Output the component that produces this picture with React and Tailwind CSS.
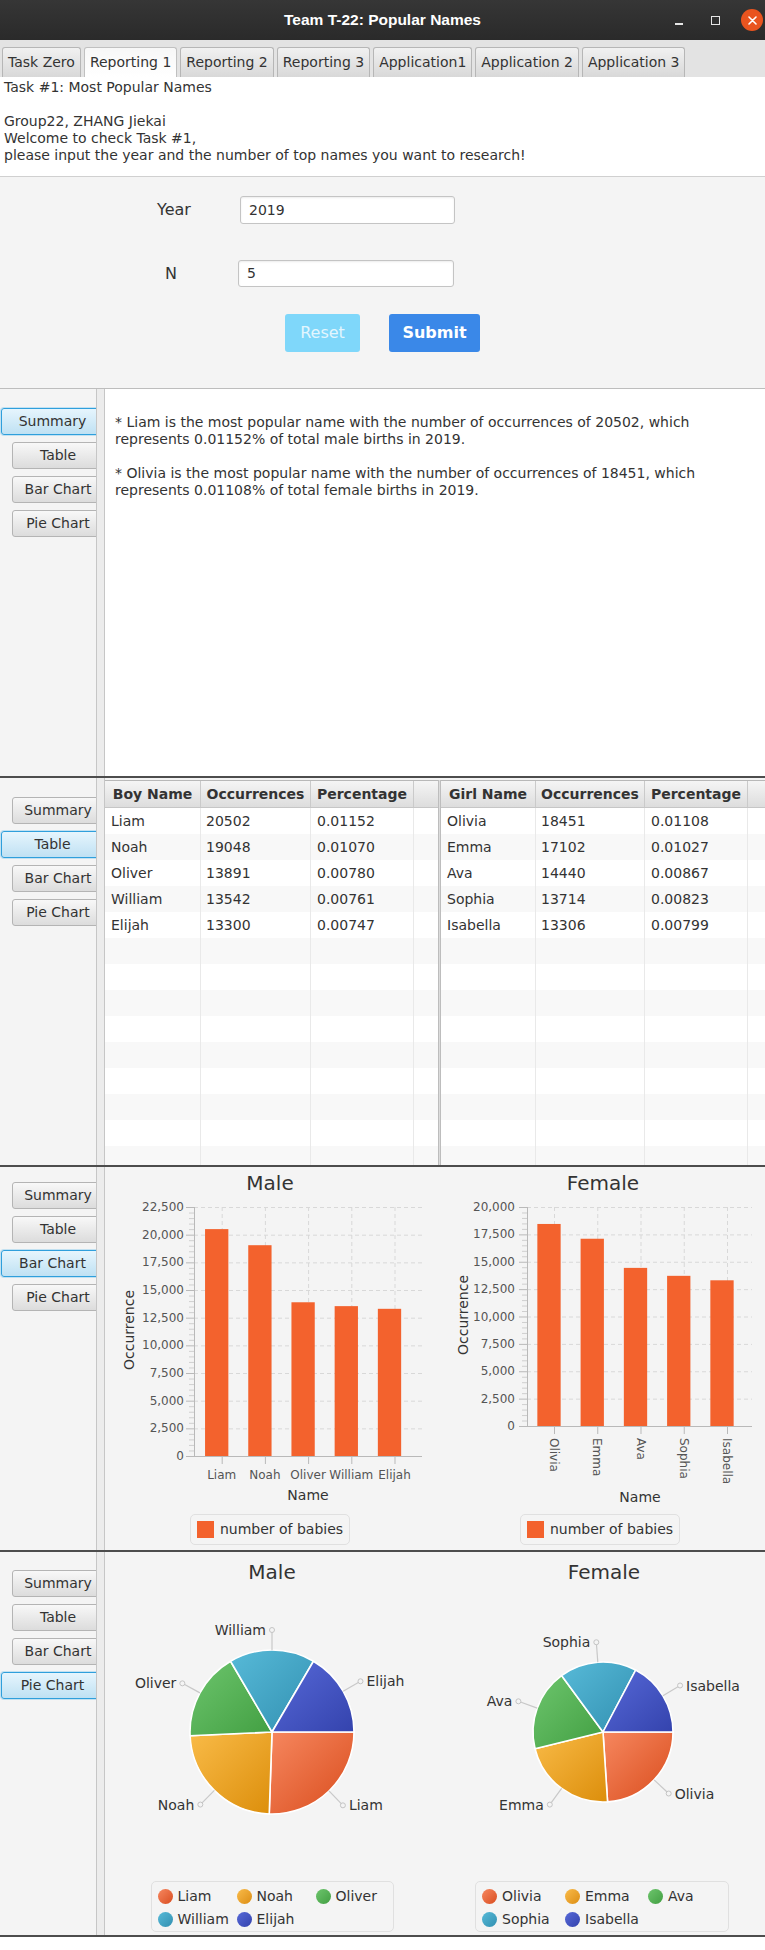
import React from 'react';

const male = [
  { name: 'Liam', n: 20502, p: '0.01152' },
  { name: 'Noah', n: 19048, p: '0.01070' },
  { name: 'Oliver', n: 13891, p: '0.00780' },
  { name: 'William', n: 13542, p: '0.00761' },
  { name: 'Elijah', n: 13300, p: '0.00747' },
];
const female = [
  { name: 'Olivia', n: 18451, p: '0.01108' },
  { name: 'Emma', n: 17102, p: '0.01027' },
  { name: 'Ava', n: 14440, p: '0.00867' },
  { name: 'Sophia', n: 13714, p: '0.00823' },
  { name: 'Isabella', n: 13306, p: '0.00799' },
];

const PIE = [
  { a: '#f6875f', b: '#d94c1c' },
  { a: '#f9bb48', b: '#dc8e0b' },
  { a: '#6dc56d', b: '#429f42' },
  { a: '#57bad8', b: '#3290b1' },
  { a: '#5769d8', b: '#3443ad' },
];

const DOTS = [
  'bg-linear-to-br from-[#f6875f] to-[#d94c1c]',
  'bg-linear-to-br from-[#f9bb48] to-[#dc8e0b]',
  'bg-linear-to-br from-[#6dc56d] to-[#429f42]',
  'bg-linear-to-br from-[#57bad8] to-[#3290b1]',
  'bg-linear-to-br from-[#5769d8] to-[#3443ad]',
];

const TABS = ['Task Zero', 'Reporting 1', 'Reporting 2', 'Reporting 3', 'Application1', 'Application 2', 'Application 3'];

function SideButtons({ active, pt }) {
  const items = ['Summary', 'Table', 'Bar Chart', 'Pie Chart'];
  return (
    <div className={`w-[96px] shrink-0 overflow-hidden bg-[#f4f4f4] flex flex-col gap-[7px] ${pt}`}>
      {items.map((it) =>
        it === active ? (
          <div
            key={it}
            className="ml-[1px] w-[103px] h-[27px] shrink-0 rounded-[3px] border border-[#2f9fdc] bg-linear-to-b from-[#e6f5fd] to-[#bfe1f3] shadow-[0_0_0_1px_rgba(100,190,235,0.35)] flex items-center justify-center text-[14px] text-[#333] whitespace-nowrap"
          >
            {it}
          </div>
        ) : (
          <div
            key={it}
            className="ml-[12px] w-[92px] h-[27px] shrink-0 rounded-[3px] border border-[#b4b4b4] bg-linear-to-b from-[#f8f8f8] to-[#dcdcdc] flex items-center justify-center text-[14px] text-[#333] whitespace-nowrap"
          >
            {it}
          </div>
        )
      )}
    </div>
  );
}

function Divider() {
  return <div className="w-[9px] shrink-0 bg-[#ececec] border-x border-[#c6c6c6]" />;
}

function NameTable({ head, data, widths, className }) {
  const rows = Array.from({ length: 15 }, (_, i) => data[i] || null);
  const heads = [head, 'Occurrences', 'Percentage'];
  return (
    <div className={`h-full overflow-hidden bg-white border-t border-[#b8b8b8] ${className}`}>
      <div className="flex h-[27px] border-b border-[#c6c6c6] bg-linear-to-b from-[#f5f5f5] to-[#dddddd]">
        {heads.map((h, i) => (
          <div
            key={h}
            className={`${widths[i]} shrink-0 border-r border-[#cacaca] flex items-center justify-center font-bold text-[14px] text-[#333] whitespace-nowrap`}
          >
            {h}
          </div>
        ))}
        <div className="flex-1" />
      </div>
      {rows.map((r, i) => (
        <div key={i} className={`flex h-[26px] ${i % 2 ? 'bg-[#f8f8f8]' : 'bg-white'}`}>
          <div className={`${widths[0]} shrink-0 border-r border-[#e9e9e9] pl-[6px] flex items-center text-[14px] text-[#333]`}>
            {r ? r.name : ''}
          </div>
          <div className={`${widths[1]} shrink-0 border-r border-[#e9e9e9] pl-[5px] flex items-center text-[14px] text-[#333]`}>
            {r ? r.n : ''}
          </div>
          <div className={`${widths[2]} shrink-0 border-r border-[#e9e9e9] pl-[6px] flex items-center text-[14px] text-[#333]`}>
            {r ? r.p : ''}
          </div>
          <div className="flex-1" />
        </div>
      ))}
    </div>
  );
}

function BarChart({ data, max, width, axisX, right, zero, ticks, labelRight, rotate, nameX, nameY, occX, occY }) {
  const top = 12;
  const scale = (zero - top) / max;
  const majors = [];
  for (let v = 0; v <= max; v += 2500) majors.push(v);
  const minors = [];
  for (let v = 500; v < max; v += 500) if (v % 2500) minors.push(v);
  const Y = (v) => zero - v * scale;
  return (
    <svg width={width} height={315} className="block">
      {majors
        .filter((v) => v > 0)
        .map((v) => (
          <line key={'h' + v} x1={axisX} x2={right} y1={Y(v) + 0.5} y2={Y(v) + 0.5} stroke="#d8d8d8" strokeDasharray="4 3" />
        ))}
      {ticks.map((t) => (
        <line key={'v' + t} x1={t + 0.5} x2={t + 0.5} y1={top} y2={zero} stroke="#d8d8d8" strokeDasharray="4 3" />
      ))}
      {data.map((d, i) => {
        const y = Y(d.n);
        return <rect key={d.name} x={ticks[i] - 5 - 11.65} y={y} width={23.3} height={zero - y} fill="#f3622d" />;
      })}
      <line x1={axisX + 0.5} x2={axisX + 0.5} y1={top} y2={zero} stroke="#b9b9b9" />
      <line x1={axisX} x2={right} y1={zero + 0.5} y2={zero + 0.5} stroke="#b9b9b9" />
      {majors.map((v) => (
        <line key={'mt' + v} x1={axisX - 8} x2={axisX} y1={Y(v) + 0.5} y2={Y(v) + 0.5} stroke="#b9b9b9" />
      ))}
      {minors.map((v) => (
        <line key={'mn' + v} x1={axisX - 5} x2={axisX} y1={Y(v) + 0.5} y2={Y(v) + 0.5} stroke="#cfcfcf" />
      ))}
      {majors.map((v) => (
        <text key={'yl' + v} x={labelRight} y={Y(v)} textAnchor="end" dominantBaseline="central" fontSize="12" fill="#555">
          {v.toLocaleString('en-US')}
        </text>
      ))}
      {ticks.map((t) => (
        <line key={'xt' + t} x1={t + 0.5} x2={t + 0.5} y1={zero} y2={zero + 8} stroke="#b9b9b9" />
      ))}
      {data.map((d, i) =>
        rotate ? (
          <text
            key={'xl' + d.name}
            x={ticks[i]}
            y={zero + 12}
            transform={`rotate(90 ${ticks[i]} ${zero + 12})`}
            textAnchor="start"
            dominantBaseline="central"
            fontSize="12"
            fill="#555"
          >
            {d.name}
          </text>
        ) : (
          <text key={'xl' + d.name} x={ticks[i]} y={zero + 19} textAnchor="middle" dominantBaseline="central" fontSize="12" fill="#555">
            {d.name}
          </text>
        )
      )}
      <text x={nameX} y={nameY} textAnchor="middle" dominantBaseline="central" fontSize="14" fill="#333">
        Name
      </text>
      <text
        x={occX}
        y={occY}
        transform={`rotate(-90 ${occX} ${occY})`}
        textAnchor="middle"
        dominantBaseline="central"
        fontSize="14"
        fill="#333"
      >
        Occurrence
      </text>
    </svg>
  );
}

function BarLegend() {
  return (
    <div className="mx-auto mt-[4px] h-[31px] flex items-center gap-[6px] px-[6px] border border-[#e0e0e0] rounded-[5px] bg-[#f4f4f4]">
      <span className="w-[17px] h-[17px] bg-[#f3622d]" />
      <span className="text-[14px] text-[#333] whitespace-nowrap">number of babies</span>
    </div>
  );
}

function PieChart({ data, cx, cy, r, width, id }) {
  const total = data.reduce((s, d) => s + d.n, 0);
  let acc = 0;
  const slices = data.map((d, i) => {
    const sweep = (d.n / total) * 360;
    const s = { a0: acc, a1: acc + sweep, i, name: d.name };
    acc += sweep;
    return s;
  });
  const rad = (deg) => (deg * Math.PI) / 180;
  const pt = (deg, rr) => [cx + rr * Math.cos(rad(deg)), cy + rr * Math.sin(rad(deg))];
  return (
    <svg width={width} height={290} className="block">
      <defs>
        {PIE.map((c, i) => (
          <linearGradient key={i} id={`${id}${i}`} x1="0" y1="0" x2="1" y2="1">
            <stop offset="0" stopColor={c.a} />
            <stop offset="1" stopColor={c.b} />
          </linearGradient>
        ))}
      </defs>
      {slices.map((s) => {
        const [x0, y0] = pt(s.a0, r);
        const [x1, y1] = pt(s.a1, r);
        const large = s.a1 - s.a0 > 180 ? 1 : 0;
        return (
          <path
            key={s.name}
            d={`M${cx},${cy} L${x0},${y0} A${r},${r} 0 ${large} 1 ${x1},${y1} Z`}
            fill={`url(#${id}${s.i})`}
            stroke="#ffffff"
            strokeWidth="1.6"
            strokeLinejoin="round"
          />
        );
      })}
      {slices.map((s) => {
        const mid = (s.a0 + s.a1) / 2;
        const [ex, ey] = pt(mid, r);
        const [lx, ly] = pt(mid, r + 20);
        const left = Math.cos(rad(mid)) < 0;
        return (
          <g key={'l' + s.name}>
            <line x1={ex} y1={ey} x2={lx} y2={ly} stroke="#c8c8c8" strokeWidth="1.2" />
            <circle cx={lx} cy={ly} r="2.5" fill="#f4f4f4" stroke="#c4c4c4" />
            <text
              x={left ? lx - 6 : lx + 6}
              y={ly}
              textAnchor={left ? 'end' : 'start'}
              dominantBaseline="central"
              fontSize="14"
              fill="#333"
            >
              {s.name}
            </text>
          </g>
        );
      })}
    </svg>
  );
}

function PieLegend({ data, cols, widths }) {
  return (
    <div className={`mx-auto mt-[7px] h-[51px] border border-[#e0e0e0] rounded-[5px] bg-[#f4f4f4] px-[6px] pt-[3px] grid ${cols}`}>
      {data.map((d, i) => (
        <div key={d.name} className="flex items-center h-[22px] gap-[5px]">
          <span className={`w-[15px] h-[15px] shrink-0 rounded-full ${DOTS[i]}`} />
          <span className="text-[14px] text-[#333] whitespace-nowrap">{d.name}</span>
        </div>
      ))}
    </div>
  );
}

export default function App() {
  return (
    <div className="w-[765px] h-[1950px] overflow-hidden bg-white font-['DejaVu_Sans',sans-serif] text-[#333]">
      {/* Title bar */}
      <div className="h-[40px] bg-linear-to-b from-[#363636] to-[#2a2a2a] grid grid-cols-[1fr_auto_1fr] items-center">
        <div />
        <div className="font-['Liberation_Sans',sans-serif] font-bold text-[15.5px] text-white whitespace-nowrap">
          Team T-22: Popular Names
        </div>
        <div className="flex items-center justify-end pr-[2px]">
          <span className="w-[8px] h-[2px] bg-[#e6e6e6] mt-[8px]" />
          <span className="ml-[28px] w-[9px] h-[9px] border border-[#e6e6e6]" />
          <span className="ml-[21px] w-[22px] h-[22px] rounded-full bg-[#e9541f] flex items-center justify-center">
            <svg width="9" height="9" viewBox="0 0 9 9">
              <path d="M1 1 L8 8 M8 1 L1 8" stroke="#fff" strokeWidth="1.6" strokeLinecap="round" />
            </svg>
          </span>
        </div>
      </div>

      {/* Tabs */}
      <div className="h-[37px] bg-[#e3e3e3] flex items-end pl-[2px] gap-[3px]">
        {TABS.map((t) =>
          t === 'Reporting 1' ? (
            <div
              key={t}
              className="h-[30px] px-[5px] flex items-center rounded-t-[3px] border border-b-0 border-[#c0c0c0] bg-linear-to-b from-[#f7f7f7] to-white text-[14px] text-[#333] whitespace-nowrap"
            >
              {t}
            </div>
          ) : (
            <div
              key={t}
              className="h-[30px] px-[5px] flex items-center rounded-t-[3px] border border-b-0 border-[#b6b6b6] bg-linear-to-b from-[#f1f1f1] to-[#d8d8d8] text-[14px] text-[#333] whitespace-nowrap"
            >
              {t}
            </div>
          )
        )}
      </div>

      {/* Intro text */}
      <div className="h-[99px] bg-white pl-[4px] pt-[2px] text-[14px] leading-[17px] text-[#333]">
        <div>Task #1: Most Popular Names</div>
        <div className="h-[17px]" />
        <div>Group22, ZHANG Jiekai</div>
        <div>Welcome to check Task #1,</div>
        <div>please input the year and the number of top names you want to research!</div>
      </div>

      {/* Form */}
      <div className="h-[212px] bg-[#f4f4f4] border-t border-[#d0d0d0] flex flex-col">
        <div className="mt-[19px] h-[28px] flex items-center">
          <span className="ml-[157px] w-[83px] text-[16px] text-[#333]">Year</span>
          <div className="w-[215px] h-[28px] bg-white border border-[#c4c4c4] rounded-[3px] shadow-[inset_0_1px_2px_rgba(0,0,0,0.08)] pl-[8px] flex items-center text-[14px] text-[#333]">
            2019
          </div>
        </div>
        <div className="mt-[36px] h-[27px] flex items-center">
          <span className="ml-[165px] w-[73px] text-[16px] text-[#333]">N</span>
          <div className="w-[216px] h-[27px] bg-white border border-[#c4c4c4] rounded-[3px] shadow-[inset_0_1px_2px_rgba(0,0,0,0.08)] pl-[8px] flex items-center text-[14px] text-[#333]">
            5
          </div>
        </div>
        <div className="mt-[27px] h-[38px] flex">
          <div className="ml-[285px] w-[75px] h-[38px] rounded-[3px] bg-[#7fd7fa] flex items-center justify-center text-[16px] text-[#e3f6fe]">
            Reset
          </div>
          <div className="ml-[29px] w-[91px] h-[38px] rounded-[3px] bg-[#3a88e8] flex items-center justify-center text-[16px] font-bold text-white">
            Submit
          </div>
        </div>
      </div>

      {/* Section 1: Summary */}
      <div className="h-[388px] border-t border-[#bdbdbd] flex">
        <SideButtons active="Summary" pt="pt-[19px]" />
        <Divider />
        <div className="flex-1 bg-white pl-[10px] pt-[25px] text-[14px] leading-[17px] text-[#333]">
          <div>* Liam is the most popular name with the number of occurrences of 20502, which</div>
          <div>represents 0.01152% of total male births in 2019.</div>
          <div className="h-[17px]" />
          <div>* Olivia is the most popular name with the number of occurrences of 18451, which</div>
          <div>represents 0.01108% of total female births in 2019.</div>
        </div>
      </div>

      {/* Section 2: Table */}
      <div className="h-[389px] border-t-2 border-[#4d4d4d] flex">
        <SideButtons active="Table" pt="pt-[19px]" />
        <Divider />
        <div className="flex-1 flex pt-[2px] bg-[#f4f4f4] min-w-0">
          <NameTable head="Boy Name" data={male} widths={['w-[96px]', 'w-[110px]', 'w-[103px]']} className="w-[333px] shrink-0" />
          <div className="w-[3px] shrink-0 bg-[#dcdcdc] border-x border-[#bdbdbd]" />
          <NameTable head="Girl Name" data={female} widths={['w-[95px]', 'w-[109px]', 'w-[103px]']} className="flex-1 min-w-0" />
        </div>
      </div>

      {/* Section 3: Bar charts */}
      <div className="h-[385px] border-t-2 border-[#4d4d4d] flex">
        <SideButtons active="Bar Chart" pt="pt-[15px]" />
        <Divider />
        <div className="flex-1 flex bg-[#f4f4f4] pt-[4px]">
          <div className="w-[330px] shrink-0 flex flex-col">
            <div className="h-[24px] leading-[24px] text-center text-[20px] text-[#333]">Male</div>
            <BarChart
              data={male}
              max={22500}
              width={330}
              axisX={89}
              right={317}
              zero={261}
              ticks={[116.7, 159.9, 203.1, 246.3, 289.5]}
              labelRight={79}
              rotate={false}
              nameX={203}
              nameY={300}
              occX={24}
              occY={135}
            />
            <BarLegend />
          </div>
          <div className="w-[330px] shrink-0 flex flex-col">
            <div className="h-[24px] leading-[24px] text-center pl-[6px] text-[20px] text-[#333]">Female</div>
            <BarChart
              data={female}
              max={20000}
              width={330}
              axisX={92}
              right={317}
              zero={231}
              ticks={[119, 162.25, 205.5, 248.75, 292]}
              labelRight={80}
              rotate={true}
              nameX={205}
              nameY={302}
              occX={28}
              occY={120}
            />
            <BarLegend />
          </div>
        </div>
      </div>

      {/* Section 4: Pie charts */}
      <div className="h-[387px] border-y-2 border-[#4d4d4d] flex">
        <SideButtons active="Pie Chart" pt="pt-[18px]" />
        <Divider />
        <div className="flex-1 flex bg-[#f4f4f4] pt-[8px]">
          <div className="w-[334px] shrink-0 flex flex-col">
            <div className="h-[24px] leading-[24px] text-center text-[20px] text-[#333]">Male</div>
            <PieChart data={male} cx={167} cy={148} r={82} width={334} id="pm" />
            <PieLegend data={male} cols="grid-cols-[79px_79px_71px]" />
          </div>
          <div className="flex-1 flex flex-col">
            <div className="h-[24px] leading-[24px] text-center pl-[4px] text-[20px] text-[#333]">Female</div>
            <PieChart data={female} cx={164} cy={148} r={70} width={326} id="pf" />
            <PieLegend data={female} cols="grid-cols-[83px_83px_74px]" />
          </div>
        </div>
      </div>
    </div>
  );
}
